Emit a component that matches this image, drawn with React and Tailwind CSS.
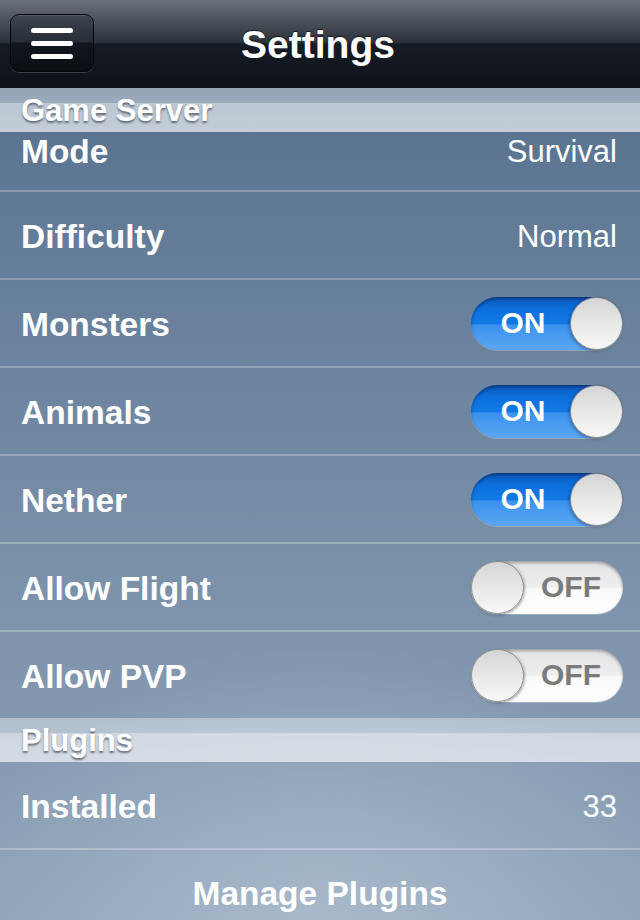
import React, { useState } from 'react';

const font = "font-['Liberation_Sans',Arial,Helvetica,sans-serif]";

const Toggle = ({ on, onChange }) => {
    if (on) {
        return (
            <button
                onClick={onChange}
                className="relative w-[152px] h-[53px] rounded-full bg-[linear-gradient(to_bottom,#0a55bb_0%,#0d6fdc_22%,#1178e4_50%,#3a92ee_53%,#5ba7f3_100%)] shadow-[inset_0_2px_3px_rgba(0,0,0,0.35),0_1px_0_rgba(255,255,255,0.25)] flex items-center"
            >
                <span className="w-[104px] text-center text-white text-[30px] font-bold leading-none">ON</span>
                <span className="absolute right-0 top-0 w-[53px] h-[53px] rounded-full border border-[#8a8a8a] bg-[linear-gradient(to_bottom,#d4d4d4,#e8e8e8_50%,#f7f7f7)] shadow-[-1px_1px_3px_rgba(0,0,0,0.35)]"></span>
            </button>
        );
    }
    return (
        <button
            onClick={onChange}
            className="relative w-[152px] h-[53px] rounded-full bg-[linear-gradient(to_bottom,#e2e2e2_0%,#eeeeee_48%,#fafafa_53%,#ffffff_100%)] shadow-[inset_0_2px_3px_rgba(0,0,0,0.3),0_1px_0_rgba(255,255,255,0.25)] flex items-center justify-end"
        >
            <span className="w-[104px] text-center text-[#7b7b7b] text-[30px] font-bold leading-none">OFF</span>
            <span className="absolute left-0 top-0 w-[53px] h-[53px] rounded-full border border-[#8a8a8a] bg-[linear-gradient(to_bottom,#d4d4d4,#e8e8e8_50%,#f7f7f7)] shadow-[1px_1px_3px_rgba(0,0,0,0.35)]"></span>
        </button>
    );
};

const SectionHeader = ({ title }) => (
    <div className="h-[44px] shrink-0 flex items-center px-[21px] bg-[linear-gradient(to_bottom,rgba(255,255,255,0.36)_0%,rgba(255,255,255,0.4)_34%,rgba(255,255,255,0.6)_35%,rgba(255,255,255,0.64)_100%)]">
        <span className="text-white text-[31px] font-bold leading-none [text-shadow:0_2px_2px_rgba(60,72,86,0.7)]">{title}</span>
    </div>
);

const Label = ({ children }) => (
    <span className="text-white text-[33.5px] font-bold leading-[36px] translate-y-[2px]">{children}</span>
);

const Row = ({ label, children, className = 'h-[88px] items-center' }) => (
    <div className={`shrink-0 flex justify-between pl-[21px] pr-[17px] border-b-2 border-white/25 ${className}`}>
        <Label>{label}</Label>
        {children}
    </div>
);

const Value = ({ children }) => (
    <span className="text-white text-[31px] leading-[36px] pr-[6px] translate-y-[2px]">{children}</span>
);

const App = () => {
    const [toggles, setToggles] = useState({
        monsters: true,
        animals: true,
        nether: true,
        flight: false,
        pvp: false,
    });

    const flip = (key) => setToggles({ ...toggles, [key]: !toggles[key] });

    return (
        <div className={`${font} w-[640px] h-[920px] overflow-hidden flex flex-col bg-[#58728f]`}>
            {/* 상단 바 */}
            <div className="h-[88px] shrink-0 relative flex items-center justify-center bg-[linear-gradient(to_bottom,#6b717a_0%,#434a53_30%,#2b323b_48%,#161c24_50%,#0d1219_100%)]">
                <button className="absolute left-[10px] top-[14px] w-[84px] h-[58px] rounded-[9px] border border-[#05080c] bg-[linear-gradient(to_bottom,#3f454e_0%,#272d35_48%,#11171e_50%,#0a0f15_100%)] shadow-[0_1px_0_rgba(255,255,255,0.18),inset_0_1px_0_rgba(255,255,255,0.12)] flex flex-col items-center justify-center gap-[8px]">
                    <span className="w-[42px] h-[5px] rounded-full bg-white"></span>
                    <span className="w-[42px] h-[5px] rounded-full bg-white"></span>
                    <span className="w-[42px] h-[5px] rounded-full bg-white"></span>
                </button>
                <h1 className="text-white text-[39px] font-bold leading-none ml-[-4px] [text-shadow:0_-1px_1px_rgba(0,0,0,0.6)]">Settings</h1>
            </div>

            {/* 설정 목록 */}
            <div className="flex-1 flex flex-col bg-[radial-gradient(ellipse_60%_35%_at_50%_100%,rgba(190,205,220,0.55),transparent),linear-gradient(to_bottom,#58728f,#7a90a9_55%,#90a4b9)]">
                <SectionHeader title="Game Server" />
                <Row label="Mode" className="h-[60px] items-start">
                    <Value>Survival</Value>
                </Row>
                <Row label="Difficulty">
                    <Value>Normal</Value>
                </Row>
                <Row label="Monsters">
                    <Toggle on={toggles.monsters} onChange={() => flip('monsters')} />
                </Row>
                <Row label="Animals">
                    <Toggle on={toggles.animals} onChange={() => flip('animals')} />
                </Row>
                <Row label="Nether">
                    <Toggle on={toggles.nether} onChange={() => flip('nether')} />
                </Row>
                <Row label="Allow Flight">
                    <Toggle on={toggles.flight} onChange={() => flip('flight')} />
                </Row>
                <div className="shrink-0 flex justify-between items-center h-[86px] pl-[21px] pr-[17px]">
                    <Label>Allow PVP</Label>
                    <Toggle on={toggles.pvp} onChange={() => flip('pvp')} />
                </div>

                <SectionHeader title="Plugins" />
                <Row label="Installed">
                    <Value>33</Value>
                </Row>
                <div className="shrink-0 h-[88px] flex items-center justify-center">
                    <span className="text-white text-[33.5px] font-bold leading-none">Manage Plugins</span>
                </div>
            </div>
        </div>
    );
};

export default App;
